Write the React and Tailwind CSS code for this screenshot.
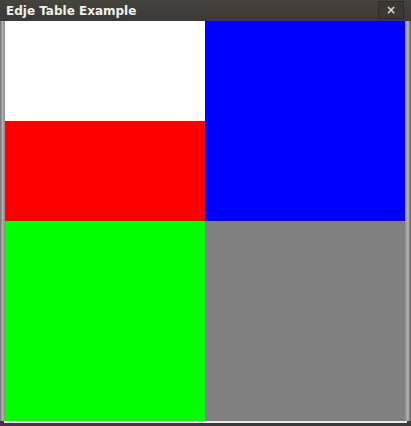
import React from 'react';

const App = () => {
  return (
    <div className="w-[411px] h-[426px] bg-[#3c3b37] flex flex-col" style={{ fontFamily: '"DejaVu Sans", sans-serif' }}>
      {/* title bar */}
      <div className="h-[21px] flex items-center justify-between bg-gradient-to-b from-[#45443f] to-[#3a3935]">
        <span className="pl-[6px] text-[12px] font-bold text-[#f0efeb] leading-none">Edje Table Example</span>
        <div className="w-[26px] h-[18px] mr-[7px] mb-[2px] bg-[#3a3935] border border-[#2e2d2a] flex items-center justify-center text-[#d8d8d8] text-[12px] font-bold">
          ×
        </div>
      </div>
      <div className="flex">
        <div className="w-[5px] bg-gradient-to-r from-[#6f6f6f] via-[#b0b0b0] to-[#8a8a8a]" />
        <div className="w-[400px] h-[400px] grid grid-cols-2 grid-rows-2">
          <div className="flex flex-col">
            <div className="flex-1 bg-white" />
            <div className="flex-1 bg-[#ff0000]" />
          </div>
          <div className="bg-[#0000ff]" />
          <div className="bg-[#00ff00]" />
          <div className="bg-[#808080]" />
        </div>
        <div className="w-[6px] bg-gradient-to-r from-[#8a8a8a] via-[#b5b5b5] to-[#5a5a5a]" />
      </div>
      <div className="h-[2px] bg-[#e8e8e8] mx-[4px]" />
      <div className="flex-1 bg-[#3a3a3a]" />
    </div>
  );
};

export default App;
